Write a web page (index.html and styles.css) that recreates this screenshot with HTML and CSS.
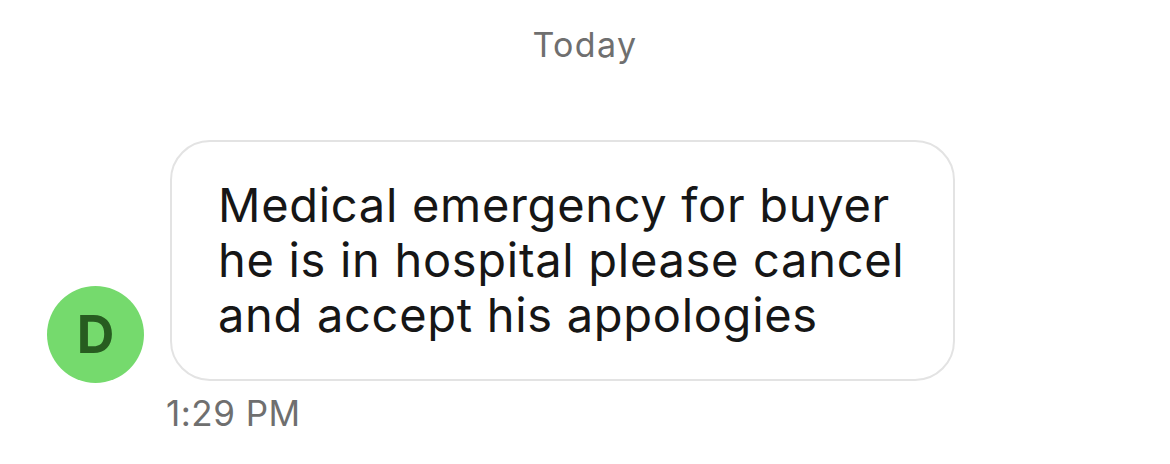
FILE: index.html
```html
<!DOCTYPE html>
<html>
<head>
<meta charset="utf-8">
<link rel="stylesheet" href="styles.css">
</head>
<body>
<div class="chat">
  <div class="day">Today</div>
  <div class="msg-row">
    <div class="avatar">D</div>
    <div class="bubble">Medical emergency for buyer<br>he is in hospital please cancel<br>and accept his appologies</div>
  </div>
  <div class="time">1:29 PM</div>
</div>
</body>
</html>
```
FILE: styles.css
```css
html, body {
  margin: 0;
  padding: 0;
  background: #ffffff;
}
body {
  font-family: Inter, "Noto Sans", sans-serif;
  width: 1170px;
  height: 464px;
  overflow: hidden;
}
.chat {
  display: flex;
  flex-direction: column;
  padding-top: 23px;
}
.day {
  text-align: center;
  font-size: 34px;
  line-height: 44px;
  color: #6f6f6f;
  letter-spacing: 1.4px;
}
.msg-row {
  display: flex;
  align-items: flex-end;
  gap: 26px;
  margin-top: 73px;
  padding-left: 47px;
}
.avatar {
  width: 97px;
  height: 97px;
  margin-bottom: -2px;
  border-radius: 50%;
  background: #75da6d;
  color: #275c20;
  font-weight: 700;
  font-size: 52px;
  line-height: 1;
  display: flex;
  align-items: center;
  justify-content: center;
  flex: none;
}
.bubble {
  width: 689px;
  border: 2px solid #e3e3e3;
  border-radius: 40px;
  padding: 35px 46px 37px 46px;
  font-size: 47px;
  line-height: 55px;
  color: #161616;
  letter-spacing: 0.7px;
}
.time {
  margin-top: 12px;
  padding-left: 166px;
  font-size: 35px;
  line-height: 40px;
  color: #6f6f6f;
  letter-spacing: 0.5px;
}
```
